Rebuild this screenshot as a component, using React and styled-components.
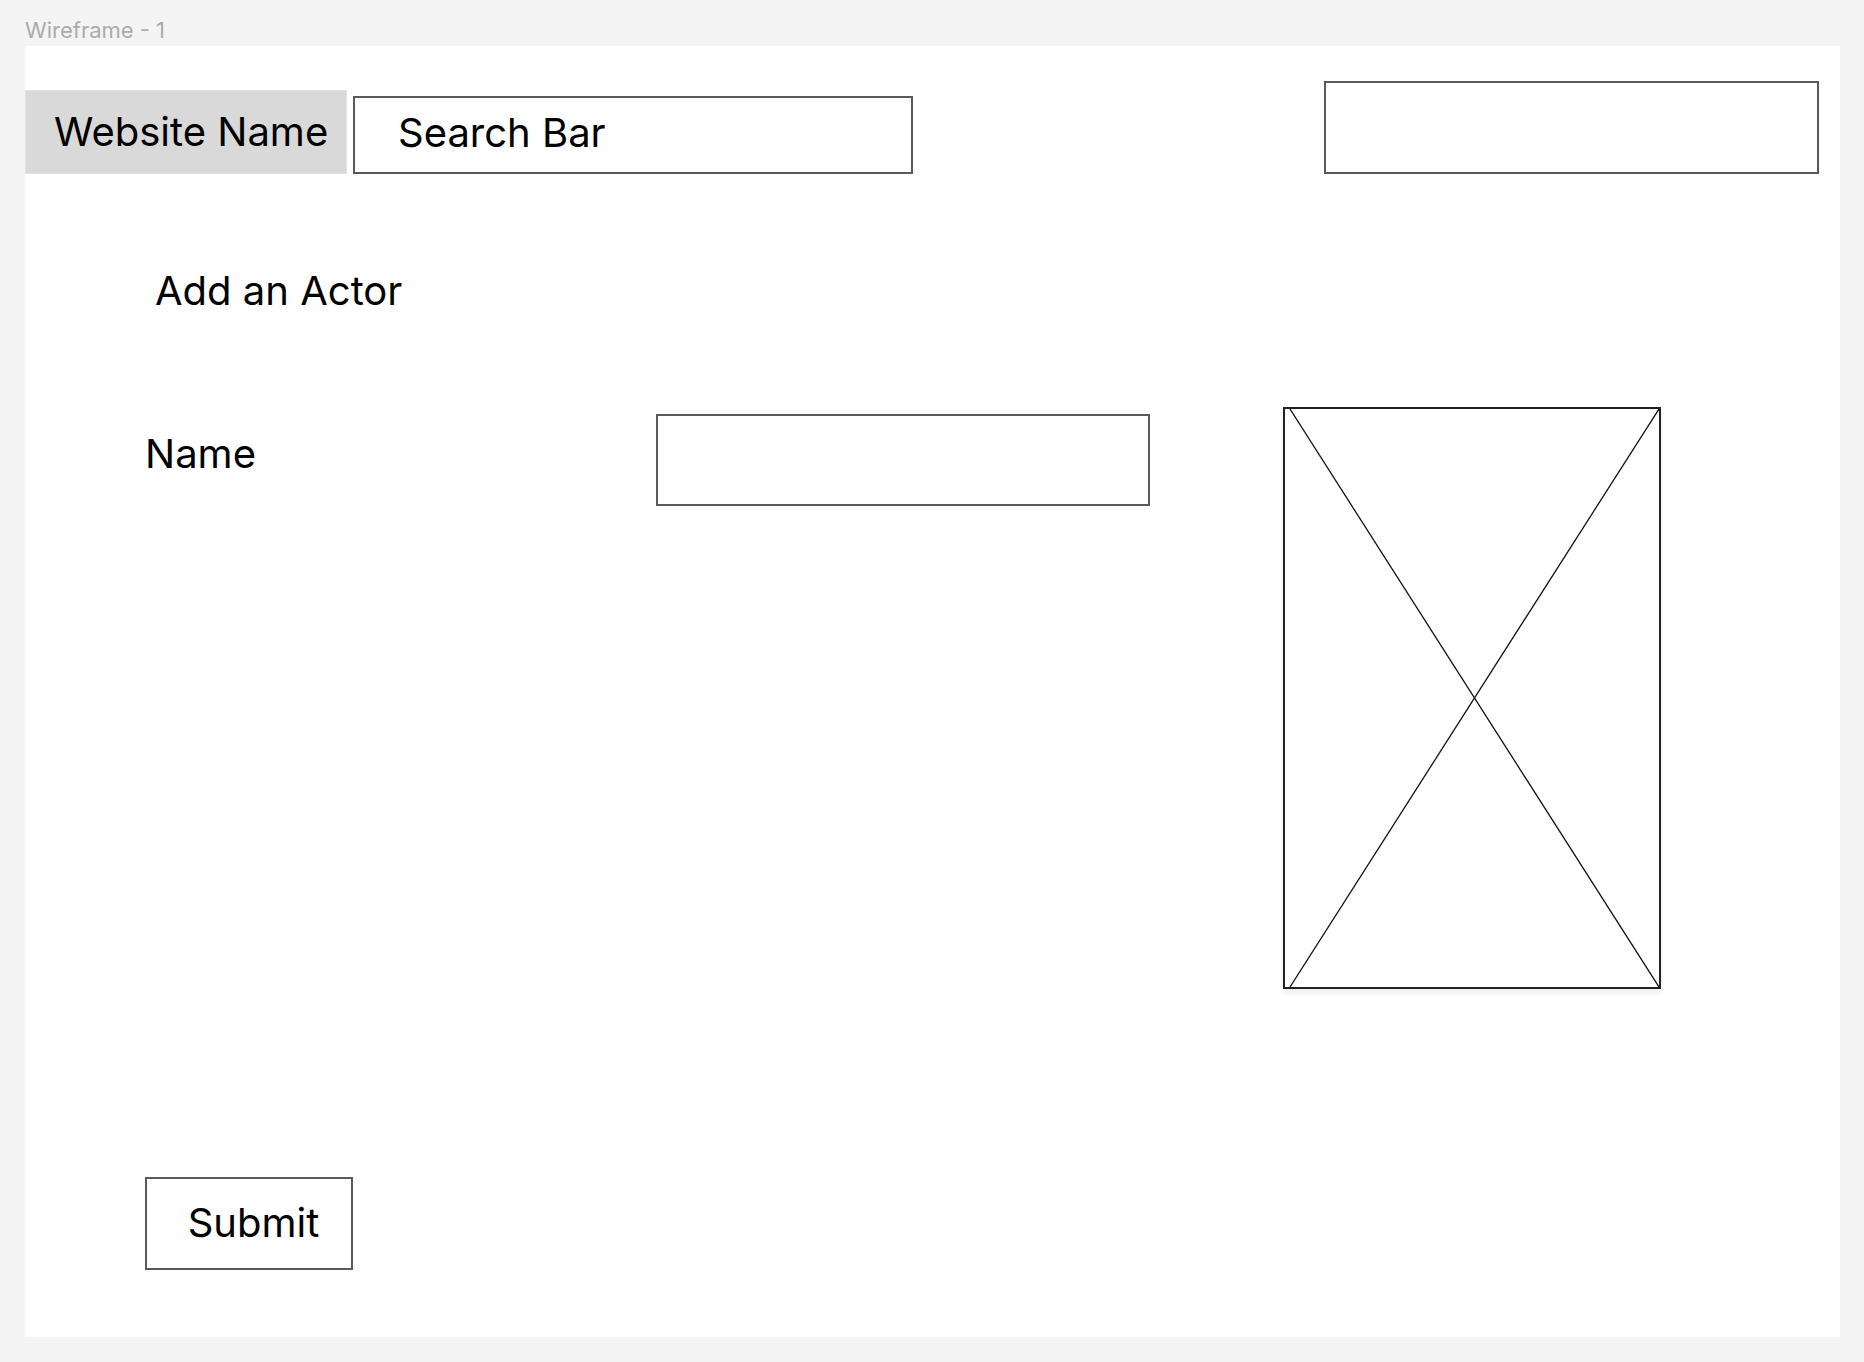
import React from "react";
import styled, { createGlobalStyle } from "styled-components";

const Global = createGlobalStyle`
  * { box-sizing: border-box; }
  html, body { margin: 0; padding: 0; background: #f4f4f4; }
  body { font-family: Inter, "Noto Sans", sans-serif; color: #000; }
`;

const Page = styled.div`
  width: 1864px;
  height: 1362px;
  padding: 0 24px 25px 25px;
  display: flex;
  flex-direction: column;
  background: #f4f4f4;
`;

const FrameLabel = styled.div`
  margin: 17px 0 3px 0;
  font-size: 22px;
  line-height: 26px;
  color: #acacac;
`;

const Frame = styled.div`
  flex: 1;
  background: #ffffff;
  display: flex;
  flex-direction: column;
`;

const Header = styled.header`
  display: flex;
  align-items: flex-end;
  padding: 35px 21px 0 0;
`;

const Brand = styled.div`
  width: 322px;
  height: 84px;
  padding-left: 28px;
  display: flex;
  align-items: center;
  background: #d9d9d9;
  border: 1px solid #e4e4e4;
  font-size: 40px;
  line-height: 48px;
`;

const Box = styled.div`
  border: 2px solid #5a5a5a;
  background: #fff;
  width: ${(p) => p.$w}px;
  height: ${(p) => p.$h}px;
`;

const SearchBar = styled(Box)`
  margin-left: 6px;
  padding: 0 0 4px 43px;
  display: flex;
  align-items: center;
  font-size: 40px;
  line-height: 48px;
`;

const RightBox = styled(Box)`
  margin-left: auto;
`;

const Content = styled.main`
  display: flex;
  flex-direction: column;
  align-items: flex-start;
  padding-left: 120px;
`;

const Heading = styled.h1`
  margin: 93px 0 0 10px;
  font-weight: 400;
  font-size: 40px;
  line-height: 48px;
`;

const FormRow = styled.div`
  margin-top: 92px;
  display: flex;
  align-items: flex-start;
`;

const FieldLabel = styled.label`
  width: 511px;
  margin-top: 23px;
  font-size: 40px;
  line-height: 48px;
`;

const NameInput = styled(Box)`
  margin-top: 7px;
`;

const ImagePlaceholder = styled.div`
  margin-left: 133px;
  width: 378px;
  height: 582px;
  border: 2px solid #222;
  background: #fff;
  box-shadow: 0 4px 6px rgba(0, 0, 0, 0.08);
  svg { display: block; width: 100%; height: 100%; }
`;

const SubmitButton = styled.button`
  margin-top: 188px;
  width: 208px;
  height: 93px;
  padding: 0 0 2px 9px;
  border: 2px solid #5a5a5a;
  background: #fff;
  font-family: Inter, "Noto Sans", sans-serif;
  font-size: 40px;
  line-height: 48px;
  color: #000;
  display: flex;
  align-items: center;
  justify-content: center;
`;

export default function App() {
  return (
    <>
      <Global />
      <Page>
        <FrameLabel>Wireframe - 1</FrameLabel>
        <Frame>
          <Header>
            <Brand>Website Name</Brand>
            <SearchBar $w={560} $h={78}>Search Bar</SearchBar>
            <RightBox $w={495} $h={93} />
          </Header>
          <Content>
            <Heading>Add an Actor</Heading>
            <FormRow>
              <FieldLabel>Name</FieldLabel>
              <NameInput $w={494} $h={92} />
              <ImagePlaceholder>
                <svg viewBox="0 0 374 578" preserveAspectRatio="none">
                  <line x1="5" y1="0" x2="374" y2="578" stroke="#111" strokeWidth="1.3" />
                  <line x1="374" y1="0" x2="5" y2="578" stroke="#111" strokeWidth="1.3" />
                </svg>
              </ImagePlaceholder>
            </FormRow>
            <SubmitButton>Submit</SubmitButton>
          </Content>
        </Frame>
      </Page>
    </>
  );
}
